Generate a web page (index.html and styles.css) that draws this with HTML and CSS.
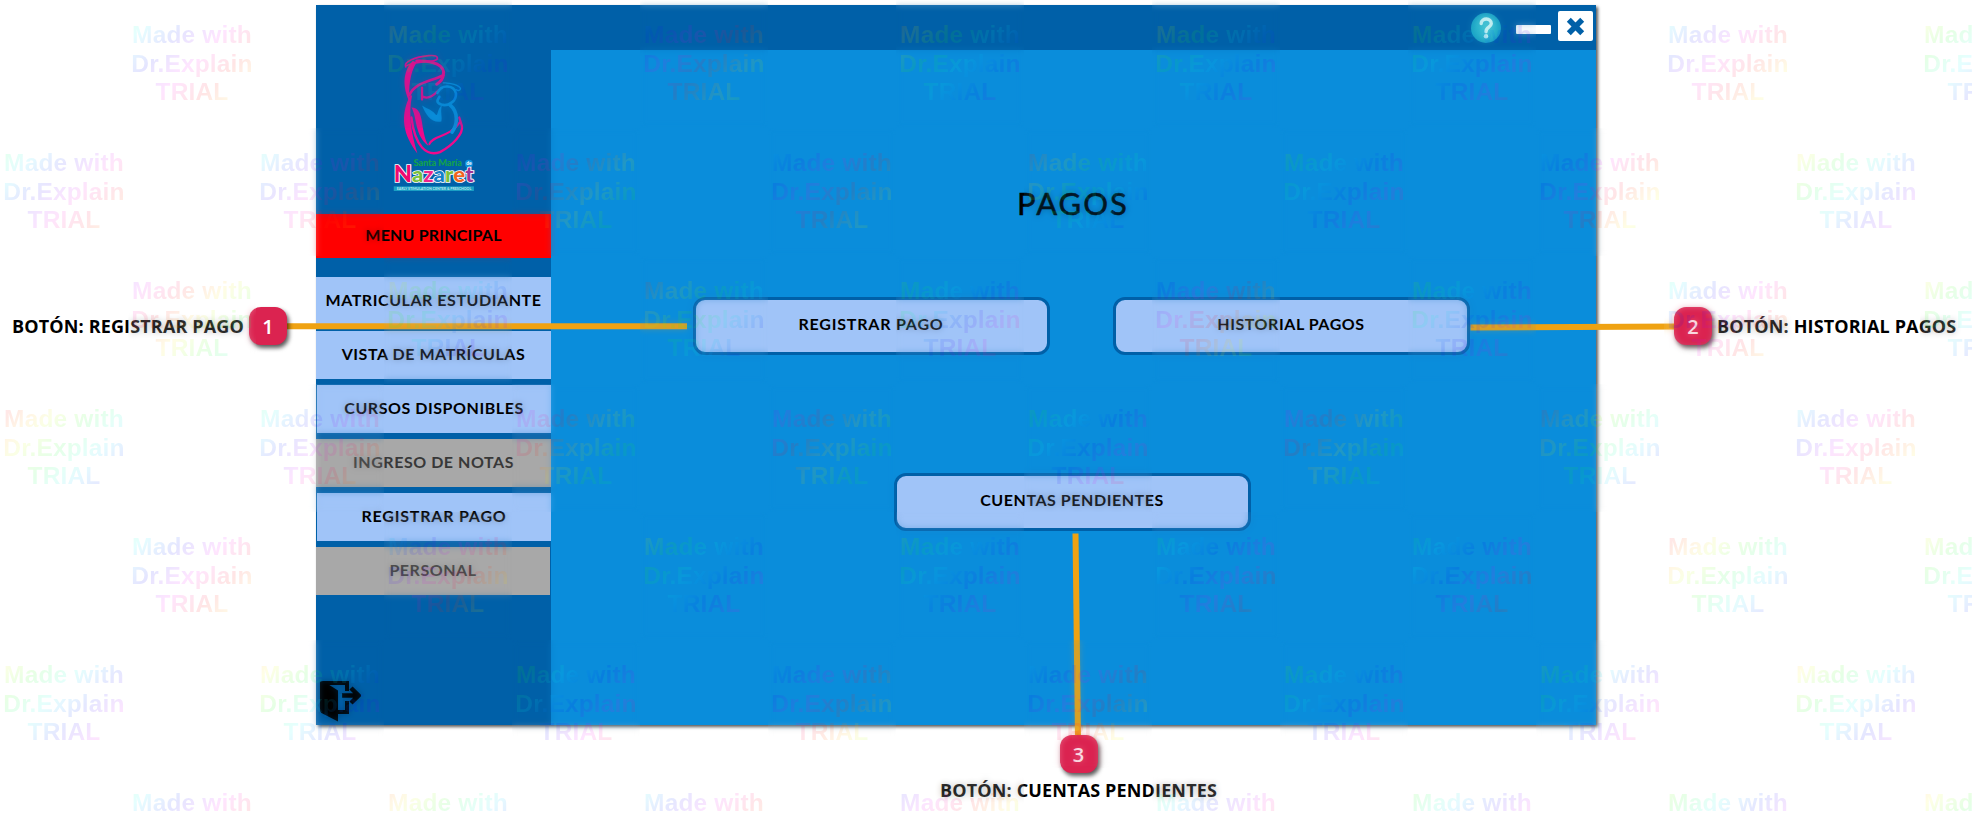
FILE: index.html
```html
<!DOCTYPE html>
<html lang="es">
<head>
<meta charset="utf-8">
<title>Pagos</title>
<link rel="stylesheet" href="styles.css">
</head>
<body>
<div class="page">
  <div class="window">
    <aside class="sidebar">
      <svg class="logo" viewBox="270 155 270 430" width="90" height="143">
        <g fill="none" stroke="#ee0a8c" stroke-linecap="round" stroke-linejoin="round">
          <path d="M317 200C310 184 345 170 386 166C405 164 414 167 412 176C404 188 350 180 320 196" stroke-width="5"/>
          <path d="M430 225C390 245 345 245 328 285" stroke-width="8"/>
          <path d="M350 182C400 180 437 195 430 225C428 240 420 246 410 252" stroke-width="9"/>
          <path d="M366 262V298M370 290C388 298 404 282 416 270" stroke-width="7"/>
          <path d="M334 352C345 440 380 470 420 456C460 435 490 400 486 378L478 352" stroke-width="7"/>
          <path d="M388 432C398 405 450 412 480 366" stroke-width="6"/>
        </g>
        <g fill="#ee0a8c">
          <path d="M338 182C306 215 308 262 328 304C326 265 328 220 350 186Z"/>
          <path d="M330 286C298 350 310 405 352 460C334 400 324 345 336 286Z"/>
          <path d="M334 322C376 322 358 392 386 438C342 405 352 350 334 322Z"/>
        </g>
        <g fill="none" stroke="#0a8fdc" stroke-linecap="round" stroke-linejoin="round">
          <path d="M412 278C425 250 463 254 468 280C470 302 445 320 424 313C405 306 414 296 418 290" stroke-width="8"/>
          <path d="M430 248C450 246 480 256 482 266C480 272 472 272 468 268" stroke-width="4"/>
          <path d="M450 314C475 335 474 372 456 396" stroke-width="11"/>
        </g>
        <path d="M366 316C385 328 395 328 406 342C415 352 410 326 426 314C420 335 428 350 424 364C395 370 378 345 366 316Z" fill="#0a8fdc"/>
        <text x="340" y="499" class="logo-top" textLength="146">Santa María</text>
        <circle cx="507" cy="491" r="12" fill="#0a8fdc"/>
        <text x="499" y="496" class="logo-de">de</text>
        <text x="281" y="545" class="logo-name" textLength="240" lengthAdjust="spacingAndGlyphs"><tspan fill="#ee0a70" font-size="66">N</tspan><tspan fill="#7ac03c">a</tspan><tspan fill="#f0258c">z</tspan><tspan fill="#1480c8">a</tspan><tspan fill="#7ac03c">r</tspan><tspan fill="#f0641e">e</tspan><tspan fill="#a03296">t</tspan></text>
        <rect x="281" y="559" width="241" height="14" fill="#1a9fc4"/>
        <text x="290" y="570" class="logo-tag" textLength="224" lengthAdjust="spacingAndGlyphs">EARLY STIMULATION CENTER &amp; PRESCHOOL</text>
      </svg>
      <div class="menu-title">MENU PRINCIPAL</div>
      <nav class="menu">
        <a class="item">MATRICULAR ESTUDIANTE</a>
        <a class="item">VISTA DE MATRÍCULAS</a>
        <a class="item inset">CURSOS DISPONIBLES</a>
        <a class="item off">INGRESO DE NOTAS</a>
        <a class="item inset wide">REGISTRAR PAGO</a>
        <a class="item off short">PERSONAL</a>
      </nav>
      <svg class="exit" viewBox="0 0 41 41" width="41" height="41">
        <path d="M3 2H27V10M27 20V31H17" fill="none" stroke="#000" stroke-width="4"/>
        <path d="M0 1.500Q0 0 3 0L18 9.500V40.500L1.500 32Q0 31 0 29Z"/>
        <path d="M22 14.500H38M31 7L38.500 14.500L31 22" fill="none" stroke="#000" stroke-width="4.500"/>
      </svg>
    </aside>
    <header class="topbar">
      <svg width="30" height="30" viewBox="0 0 30 30">
        <defs><radialGradient id="help"><stop offset="0" stop-color="#38bfd0"/><stop offset="1" stop-color="#1fabc9"/></radialGradient></defs>
        <circle cx="15" cy="15" r="15" fill="url(#help)"/>
        <path d="M10.200 10.500C10.500 4.500 20.500 4.500 20.300 10.700C20 14.500 15 14 15 18.800" fill="none" stroke="#d9f7f7" stroke-width="3.400" stroke-linecap="round"/>
        <circle cx="15" cy="23.300" r="2.200" fill="#d9f7f7"/>
      </svg>
      <span class="minimize"></span>
      <span class="close"><svg width="19" height="19" viewBox="0 0 17 17"><path d="M2.500 2.500L14.500 14.500M14.500 2.500L2.500 14.500" stroke="#0060a8" stroke-width="5"/></svg></span>
    </header>
    <main class="main">
      <h1>PAGOS</h1>
      <div class="pair">
        <button class="btn wide">REGISTRAR PAGO</button>
        <button class="btn">HISTORIAL PAGOS</button>
      </div>
      <button class="btn single">CUENTAS PENDIENTES</button>
    </main>
  </div>

  <svg class="leaders" width="1972" height="819" viewBox="0 0 1972 819">
    <g stroke="#efa212" stroke-width="6">
      <path d="M280 326.300H687"/>
      <path d="M1470.500 327.500L1680 326.500"/>
      <path d="M1075.500 533.500L1078 740"/>
    </g>
  </svg>
  <div class="note n1"><span>BOTÓN: REGISTRAR PAGO</span><b>1</b></div>
  <div class="note n2"><b>2</b><span>BOTÓN: HISTORIAL PAGOS</span></div>
  <div class="note n3"><b>3</b><span>BOTÓN: CUENTAS PENDIENTES</span></div>

  <div class="watermark" id="watermark"></div>
</div>
<script src="watermark.js"></script>
</body>
</html>
```
FILE: styles.css
```css
* { box-sizing: border-box; }
body { margin: 0; background: #fff; }
.page { position: relative; width: 1972px; height: 819px; overflow: hidden; padding: 5px 0 0 316px; }

.window {
  display: grid;
  grid-template: 45px 675px / 235px 1045px;
  width: 1280px;
  height: 720px;
  background: #0a8ddb;
  box-shadow: 2px 2px 3px rgba(0, 0, 0, .65);
  font-family: Lato, sans-serif;
  color: #000;
}
.sidebar { grid-row: 1 / 3; background: #0060a8; display: flex; flex-direction: column; }
.logo { margin: 47px 0 0 74px; flex: none; }
.logo-top { font: 900 28px Lato, sans-serif; fill: #12a04c; }
.logo-de { font: 700 15px Lato, sans-serif; fill: #fff; }
.logo-name { font: 900 62px Lato, sans-serif; stroke: #fff; stroke-width: 5px; paint-order: stroke; }
.logo-tag { font: 700 11px Lato, sans-serif; fill: #b9e6ee; }

.menu-title { display: flex; align-items: center; justify-content: center; height: 44px; margin-top: 19px; padding-bottom: 3px; background: #f00; font-weight: 700; font-size: 16px; letter-spacing: .2px; }
.menu { display: grid; grid-auto-rows: 48px; gap: 6px; margin-top: 19px; }
.item { display: flex; align-items: center; justify-content: center; padding-bottom: 4px; background: #a0c4f8; font-weight: 700; font-size: 16px; letter-spacing: .55px; }
.inset { margin-left: 1px; }
.off { background: #a8a8a8; color: #383838; }
.short { margin-right: 1px; }
.exit { margin: 86px 0 0 4px; flex: none; }

.topbar { display: flex; justify-content: flex-end; align-items: flex-start; background: #0060a8; padding: 6px 3px 0 0; }
.topbar > svg { margin: 2px 15px 0 0; }
.minimize { width: 35px; height: 9px; margin: 14px 7px 0 0; background: #fff; border-radius: 1px; }
.close { display: grid; place-items: center; width: 35px; height: 30px; background: #fff; border-radius: 2px; }

.main { display: flex; flex-direction: column; align-items: center; padding-right: 3px; }
h1 { margin: 131px 0 0 2px; font-size: 31px; line-height: 44px; font-weight: 400; letter-spacing: 2px; -webkit-text-stroke: .5px #000; }
.pair { display: flex; gap: 63px; margin: 72px 0 0 18px; }
.btn { width: 357px; height: 58px; padding: 0 0 5px; border: 3px solid #0060a8; border-radius: 12px; background: #a0c4f8; color: #000; font: 700 16px Lato, sans-serif; letter-spacing: .55px; }
.wide { letter-spacing: .8px; }
.single { margin-top: 118px; }

.leaders { position: absolute; left: 0; top: 0; }
.note { position: absolute; display: flex; align-items: center; font: 700 18px "Open Sans", sans-serif; letter-spacing: .15px; color: #000; white-space: nowrap; }
.note b { display: grid; place-items: center; width: 38px; height: 38px; border-radius: 12px; background: #db2350; color: #fff; font-size: 20px; font-weight: 600; box-shadow: 2px 3px 4px rgba(0, 0, 0, .65); }
.n1 { left: 12px; top: 307px; gap: 5px; }
.n2 { left: 1674px; top: 307px; gap: 5px; }
.n3 { left: 940px; top: 735px; flex-direction: column; gap: 5px; }

.watermark { position: absolute; left: 0; top: 0; width: 2048px; pointer-events: none; }
.row { display: flex; gap: 128px; height: 128px; }
.row.shift { padding-left: 128px; }
.tile { position: relative; flex: none; width: 128px; height: 128px; }
.tile::before { content: ""; position: absolute; inset: 0; backdrop-filter: blur(3px); opacity: .26; }
.tile p {
  margin: 0;
  position: relative;
  height: 128px;
  padding-top: 21px;
  font: 700 24.5px/28.5px "Liberation Sans", sans-serif;
  letter-spacing: .15px;
  text-align: center;
  white-space: nowrap;
  opacity: .1;
  color: transparent;
  background: linear-gradient(135deg,
    hsl(var(--h) 100% 50%),
    hsl(calc(var(--h) + 30) 100% 50%),
    hsl(calc(var(--h) + 60) 100% 50%),
    hsl(calc(var(--h) + 90) 100% 50%),
    hsl(calc(var(--h) + 120) 100% 50%),
    hsl(calc(var(--h) + 150) 100% 50%),
    hsl(calc(var(--h) + 180) 100% 50%),
    hsl(calc(var(--h) + 210) 100% 50%),
    hsl(calc(var(--h) + 240) 100% 50%),
    hsl(calc(var(--h) + 270) 100% 50%),
    hsl(calc(var(--h) + 300) 100% 50%),
    hsl(calc(var(--h) + 330) 100% 50%),
    hsl(calc(var(--h) + 360) 100% 50%));
  -webkit-background-clip: text;
  background-clip: text;
}
```
FILE: watermark.js
```js
// Hue of the first letter in every tile, row by row.
const hues = [
  [180, 50, 230, 50, 70, 110, 200, 90],
  [160, 190, 270, 215, 20, 110, 210, 70],
  [290, 70, 20, 110, 240, 110, 180, 80],
  [10, 170, 290, 290, 120, 300, 10, 200],
  [180, 200, 80, 100, 150, 150, 10, 80],
  [80, 60, 120, 220, 210, 110, 100, 60],
  [180, 40, 200, 260, 160, 130, 110, 60]
];
const mark = document.getElementById('watermark');
hues.forEach((list, i) => {
  const row = document.createElement('div');
  row.className = i % 2 ? 'row' : 'row shift';
  list.forEach(h => {
    const tile = document.createElement('div');
    tile.className = 'tile';
    tile.style.setProperty('--h', h - 58);
    tile.innerHTML = '<p>Made with<br>Dr.Explain<br>TRIAL</p>';
    row.append(tile);
  });
  mark.append(row);
});
```
